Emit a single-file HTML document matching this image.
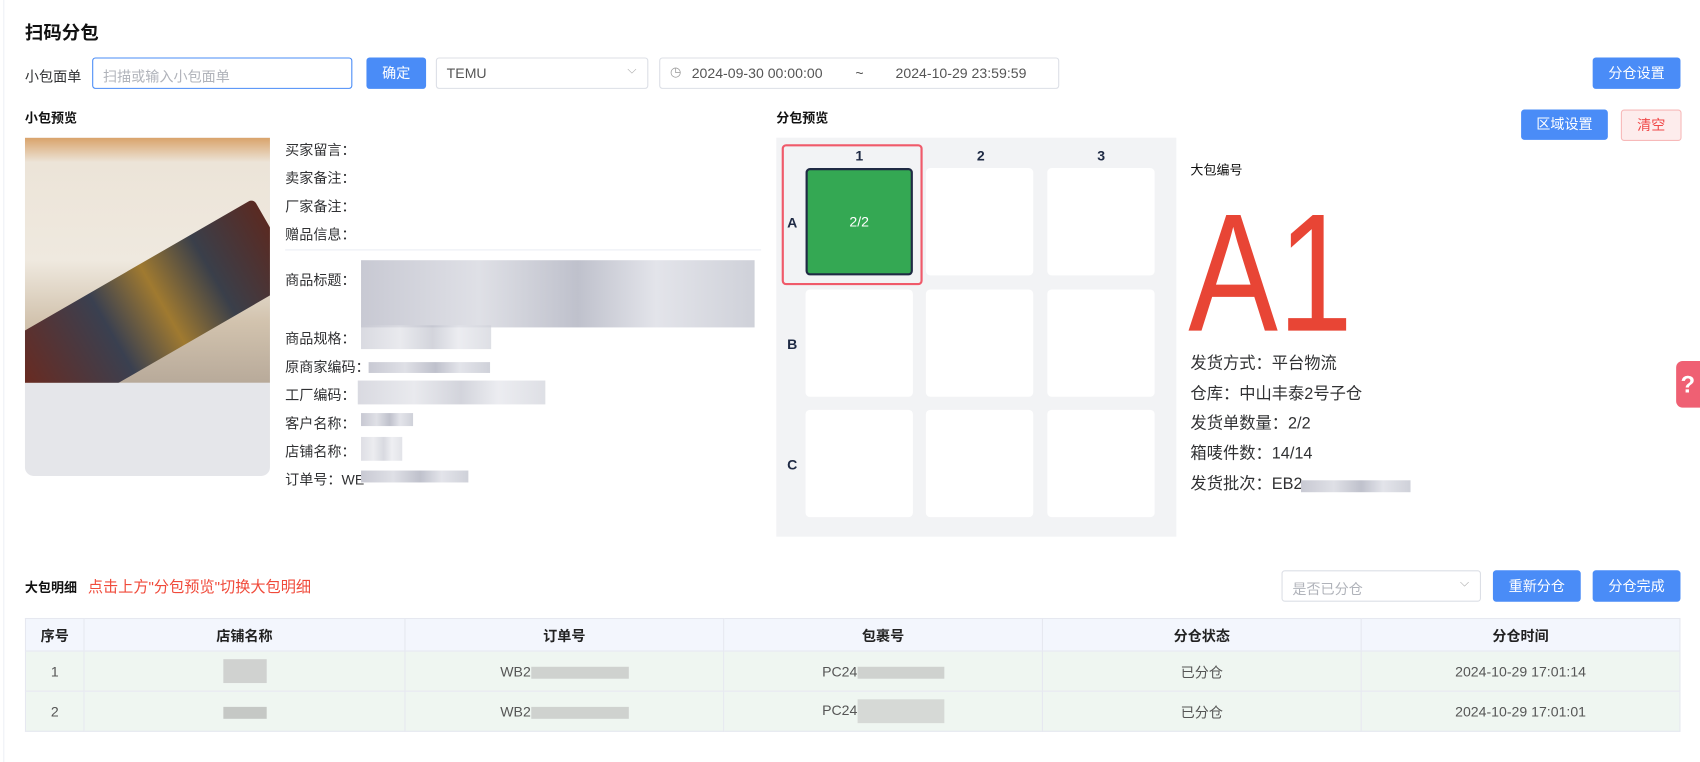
<!DOCTYPE html>
<html><head><meta charset="utf-8"><style>
html,body{margin:0;padding:0;background:#fff;width:1700px;height:762px;overflow:hidden}
#w{position:absolute;left:0;top:0;width:1568px;height:703px;transform:scale(1.08418);transform-origin:0 0;font-family:"Liberation Sans","Noto Sans CJK SC",sans-serif;color:#303133;font-size:13px}
.a{position:absolute;white-space:nowrap}
.btn{position:absolute;background:#4a8cf7;color:#fff;border-radius:3px;text-align:center;font-size:13px}
.box{position:absolute;border:1px solid #dcdfe6;border-radius:3px;background:#fff;box-sizing:border-box}
.lbl{position:absolute;left:263px;font-size:13px;color:#303133}
.blur{position:absolute;background:linear-gradient(90deg,#c8c9d3,#dfe0e6 30%,#bfc1cc 55%,#e3e4ea 75%,#cfd1d9)}
.cell{position:absolute;background:#fff;border-radius:4px;width:99px;height:99px}
.g{position:absolute;font-weight:bold;font-size:13px;color:#1f2a44}
.info{position:absolute;left:1098px;font-size:15px;color:#303133}
table{position:absolute;left:23px;top:570px;width:1527px;border-collapse:collapse;font-size:13px}
td,th{border:1px solid #e6e8f0;text-align:center;height:36px;padding:0}
th{background:#f3f6fd;height:29px;font-weight:bold;color:#222}
td{background:#eff6f1;color:#555}
</style></head><body><div id="w">
<div class="a" style="left:3px;top:0;width:1px;height:703px;background:#eef0f5"></div>
<div class="a" style="left:23px;top:16px;font-size:17px;font-weight:bold;color:#111">扫码分包</div>
<div class="a" style="left:23px;top:60px">小包面单</div>
<div class="box" style="left:85px;top:53px;width:240px;height:29px;border-color:#4a8cf7"><span class="a" style="left:9px;top:6px;color:#b0b3ba">扫描或输入小包面单</span></div>
<div class="btn" style="left:338px;top:53px;width:55px;height:29px;line-height:29px">确定</div>
<div class="box" style="left:402px;top:53px;width:196px;height:29px"><span class="a" style="left:9px;top:6px;color:#555">TEMU</span><span class="a" style="right:10px;top:5px;color:#aaa;font-size:11px">⌵</span></div>
<div class="box" style="left:608px;top:53px;width:369px;height:29px"><span class="a" style="left:9px;top:5px;color:#999;font-size:12px">◷</span><span class="a" style="left:29px;top:6px;color:#555">2024-09-30 00:00:00</span><span class="a" style="left:180px;top:6px;color:#555">~</span><span class="a" style="left:217px;top:6px;color:#555">2024-10-29 23:59:59</span></div>
<div class="btn" style="left:1469px;top:53px;width:81px;height:29px;line-height:29px">分仓设置</div>

<div class="a" style="left:23px;top:100px;font-weight:bold;font-size:12px;color:#111">小包预览</div>
<div class="a" style="left:716px;top:100px;font-weight:bold;font-size:12px;color:#111">分包预览</div>
<div class="btn" style="left:1403px;top:101px;width:80px;height:28px;line-height:28px">区域设置</div>
<div class="a" style="left:1495px;top:101px;width:54px;height:27px;line-height:27px;text-align:center;background:#fdecec;border:1px solid #f7b9b9;border-radius:3px;color:#f04848">清空</div>

<div class="a" style="left:23px;top:127px;width:226px;height:312px;background:#e5e6ea;border-radius:0 0 8px 8px;overflow:hidden">
<div class="a" style="left:0;top:0;width:226px;height:226px;overflow:hidden;background:linear-gradient(180deg,#d9a36a 0%,#ece4d8 10%,#efe9df 50%,#d2c3ae 75%,#b8aa9a 100%)">
<div class="a" style="left:-20px;top:118px;width:270px;height:85px;background:linear-gradient(90deg,#6a2a20,#3a4050 35%,#a07a30 55%,#3a3f4a 75%,#5a2a22);transform:rotate(-30deg);border-radius:5px"></div>
</div>
</div>

<div class="lbl" style="top:128px">买家留言：</div>
<div class="lbl" style="top:154px">卖家备注：</div>
<div class="lbl" style="top:180px">厂家备注：</div>
<div class="lbl" style="top:206px">赠品信息：</div>
<div class="a" style="left:263px;top:230px;width:439px;height:1px;background:#ebeef5"></div>
<div class="lbl" style="top:248px">商品标题：</div>
<div class="blur" style="left:333px;top:240px;width:363px;height:62px"></div>
<div class="lbl" style="top:302px">商品规格：</div>
<div class="blur" style="left:333px;top:300px;width:120px;height:22px;opacity:.7"></div>
<div class="lbl" style="top:328px">原商家编码：</div>
<div class="blur" style="left:340px;top:334px;width:112px;height:10px"></div>
<div class="lbl" style="top:354px">工厂编码：</div>
<div class="blur" style="left:330px;top:351px;width:173px;height:22px;opacity:.7"></div>
<div class="lbl" style="top:380px">客户名称：</div>
<div class="blur" style="left:333px;top:381px;width:48px;height:12px"></div>
<div class="lbl" style="top:406px">店铺名称：</div>
<div class="blur" style="left:333px;top:403px;width:38px;height:22px;opacity:.6"></div>
<div class="lbl" style="top:432px">订单号：WE</div>
<div class="blur" style="left:333px;top:434px;width:99px;height:11px"></div>

<div class="a" style="left:716px;top:127px;width:369px;height:368px;background:#f2f3f5"></div>
<div class="a" style="left:721px;top:133px;width:126px;height:126px;border:2px solid #f05a6a;border-radius:4px"></div>
<div class="g" style="left:789px;top:136px">1</div><div class="g" style="left:901px;top:136px">2</div><div class="g" style="left:1012px;top:136px">3</div>
<div class="g" style="left:726px;top:198px">A</div><div class="g" style="left:726px;top:310px">B</div><div class="g" style="left:726px;top:421px">C</div>
<div class="cell" style="left:743px;top:155px;background:#34a853;border:2px solid #1f2a44;box-sizing:border-box;color:#fff;text-align:center;line-height:95px;font-size:13px">2/2</div>
<div class="cell" style="left:854px;top:155px"></div><div class="cell" style="left:966px;top:155px"></div>
<div class="cell" style="left:743px;top:267px"></div><div class="cell" style="left:854px;top:267px"></div><div class="cell" style="left:966px;top:267px"></div>
<div class="cell" style="left:743px;top:378px"></div><div class="cell" style="left:854px;top:378px"></div><div class="cell" style="left:966px;top:378px"></div>

<div class="a" style="left:1098px;top:148px;font-size:12px;color:#111">大包编号</div>
<div class="a" style="left:1096px;top:174px;font-size:155px;line-height:155px;color:#e84535;transform:scaleX(0.8);transform-origin:0 0">A1</div>
<div class="info" style="top:324px">发货方式：平台物流</div>
<div class="info" style="top:352px">仓库：中山丰泰2号子仓</div>
<div class="info" style="top:379px">发货单数量：2/2</div>
<div class="info" style="top:407px">箱唛件数：14/14</div>
<div class="info" style="top:435px">发货批次：EB2</div>
<div class="blur" style="left:1200px;top:443px;width:101px;height:11px"></div>
<div class="a" style="left:1546px;top:333px;width:24px;height:43px;background:#ef6073;border-radius:6px 0 0 6px;color:#fff;font-weight:bold;font-size:22px;line-height:43px;text-indent:4px">?</div>

<div class="a" style="left:23px;top:533px;font-weight:bold;font-size:12px;color:#111">大包明细</div>
<div class="a" style="left:81px;top:531px;font-size:14px;color:#f04a3a">点击上方"分包预览"切换大包明细</div>
<div class="box" style="left:1182px;top:526px;width:184px;height:29px"><span class="a" style="left:9px;top:6px;color:#b0b3ba">是否已分仓</span><span class="a" style="right:10px;top:5px;color:#aaa;font-size:11px">⌵</span></div>
<div class="btn" style="left:1377px;top:526px;width:81px;height:29px;line-height:29px">重新分仓</div>
<div class="btn" style="left:1469px;top:526px;width:81px;height:29px;line-height:29px">分仓完成</div>

<table>
<tr><th style="width:53px">序号</th><th style="width:295px">店铺名称</th><th style="width:293px">订单号</th><th style="width:293px">包裹号</th><th style="width:293px">分仓状态</th><th>分仓时间</th></tr>
<tr><td>1</td><td><span style="display:inline-block;width:40px;height:22px;background:#d0d2d0;vertical-align:middle"></span></td><td>WB2<span style="display:inline-block;width:90px;height:11px;background:#cfd2cf;vertical-align:middle"></span></td><td>PC24<span style="display:inline-block;width:80px;height:11px;background:#cfd2cf;vertical-align:middle"></span></td><td>已分仓</td><td>2024-10-29 17:01:14</td></tr>
<tr><td>2</td><td><span style="display:inline-block;width:40px;height:11px;background:#c5c8c5;vertical-align:middle"></span></td><td>WB2<span style="display:inline-block;width:90px;height:11px;background:#cfd2cf;vertical-align:middle"></span></td><td>PC24<span style="display:inline-block;width:80px;height:22px;background:#d6d9d6;vertical-align:middle"></span></td><td>已分仓</td><td>2024-10-29 17:01:01</td></tr>
</table>
</div></body></html>
